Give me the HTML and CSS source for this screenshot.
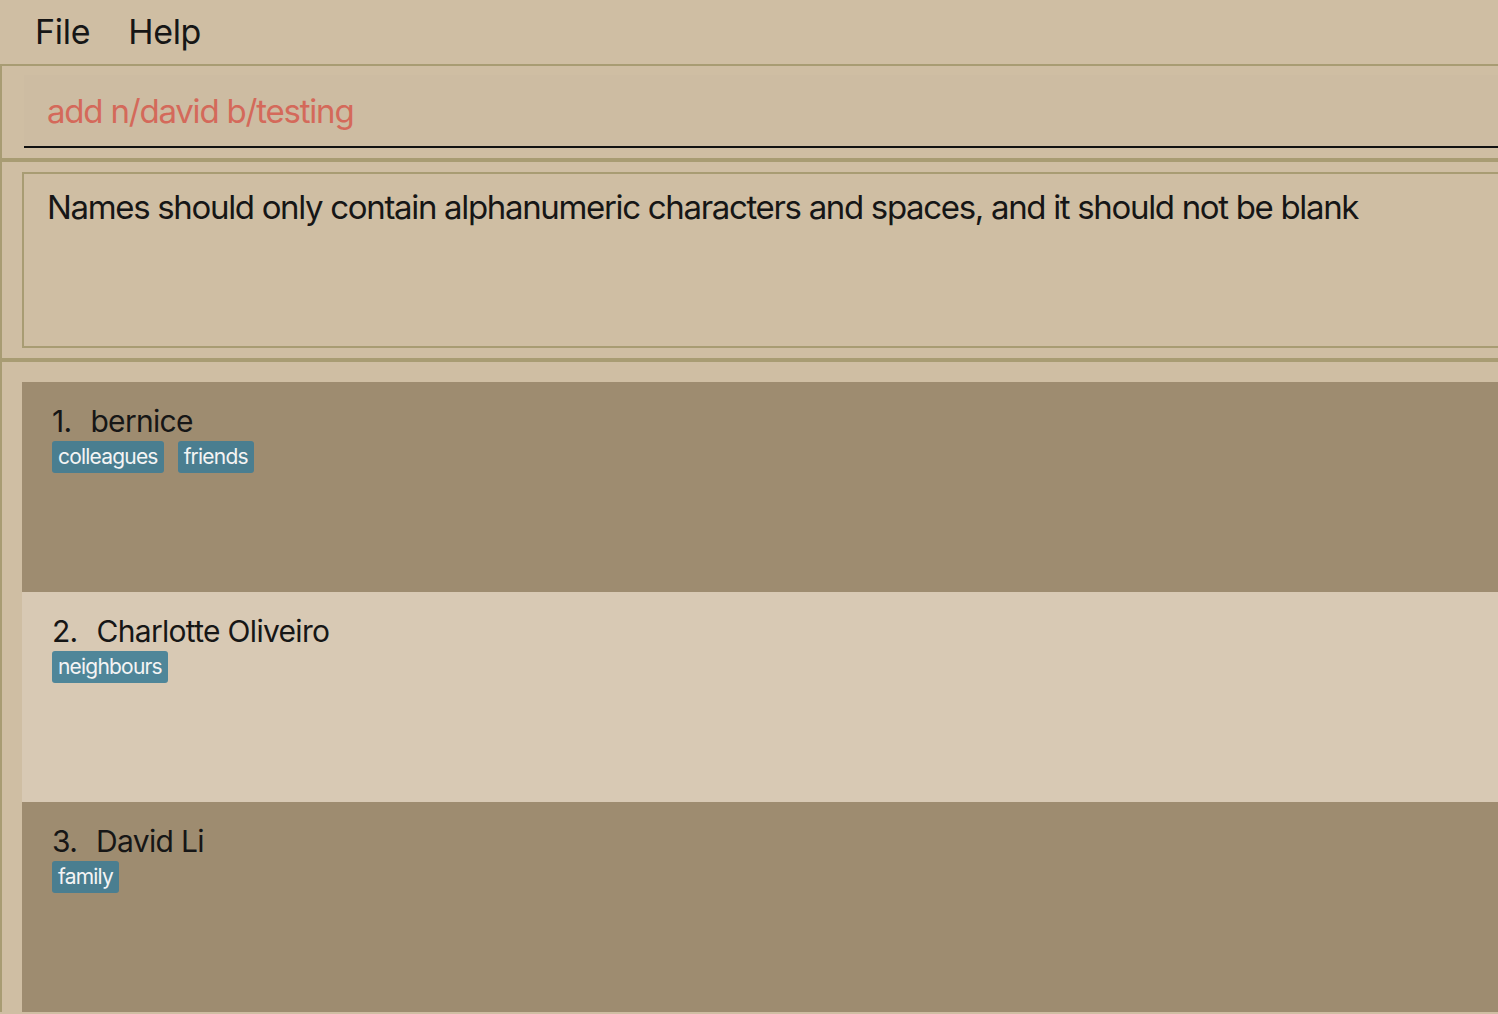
FILE: index.html
```html
<!DOCTYPE html>
<html>
<head>
<meta charset="utf-8">
<link rel="stylesheet" href="styles.css">
</head>
<body>
<div class="menubar">
  <span class="menu-item">File</span>
  <span class="menu-item">Help</span>
</div>
<div class="main">
  <div class="command">
    <div class="command-field">add n/david b/testing</div>
  </div>
  <div class="result">
    <div class="result-box">Names should only contain alphanumeric characters and spaces, and it should not be blank</div>
  </div>
  <div class="list">
    <div class="card dark">
      <div class="name"><span class="idx">1.</span>bernice</div>
      <div class="tags"><span class="tag">colleagues</span><span class="tag">friends</span></div>
    </div>
    <div class="card light">
      <div class="name"><span class="idx">2.</span>Charlotte Oliveiro</div>
      <div class="tags"><span class="tag">neighbours</span></div>
    </div>
    <div class="card dark">
      <div class="name"><span class="idx">3.</span>David Li</div>
      <div class="tags"><span class="tag">family</span></div>
    </div>
  </div>
</div>
</body>
</html>
```
FILE: styles.css
```css
html, body {
  margin: 0;
  padding: 0;
  overflow: hidden;
  background: #cfbea3;
  font-family: Inter, "Noto Sans", sans-serif;
  color: #161616;
}
.menubar {
  height: 64px;
  display: flex;
  align-items: center;
  gap: 38px;
  padding-left: 35px;
  border-bottom: 2px solid #a89c73;
}
.menu-item {
  font-size: 34px;
  line-height: 1;
  letter-spacing: -0.3px;
}
.main {
  border-left: 2px solid #a89c73;
}
.command {
  height: 94px;
  padding-left: 22px;
  box-sizing: border-box;
  border-bottom: 2px solid #a89c73;
  padding-top: 9px;
}
.command-field {
  height: 73px;
  box-sizing: border-box;
  border-bottom: 2px solid #111;
  font-size: 33px;
  letter-spacing: -1.2px;
  color: #d4695a;
  padding-left: 23px;
  padding-top: 16px;
  background: #cdbca2;
}
.result {
  border-top: 2px solid #a89c73;
  border-bottom: 4px solid #a89c73;
  padding: 10px 0 10px 20px;
}
.result-box {
  height: 176px;
  box-sizing: border-box;
  border: 2px solid #a89c73;
  border-right: none;
  padding: 13px 0 0 23px;
  font-size: 33px;
  letter-spacing: -1.33px;
  white-space: nowrap;
}
.list {
  padding: 20px 0 0 20px;
}
.card {
  height: 210px;
  box-sizing: border-box;
  padding: 21px 0 0 30px;
}
.dark { background: #9e8c70; }
.light { background: #d8c9b4; }
.name {
  font-size: 30px;
  line-height: 36px;
  letter-spacing: -0.7px;
}
.idx {
  margin-right: 19px;
}
.tags {
  display: flex;
  gap: 14px;
  margin-top: 2px;
}
.tag {
  background: #4a7e90;
  color: #f4f4f4;
  font-size: 21px;
  line-height: 32px;
  letter-spacing: -0.8px;
  padding: 0 6px;
  border-radius: 3px;
}
.light .tag { background: #4f8699; }
```
